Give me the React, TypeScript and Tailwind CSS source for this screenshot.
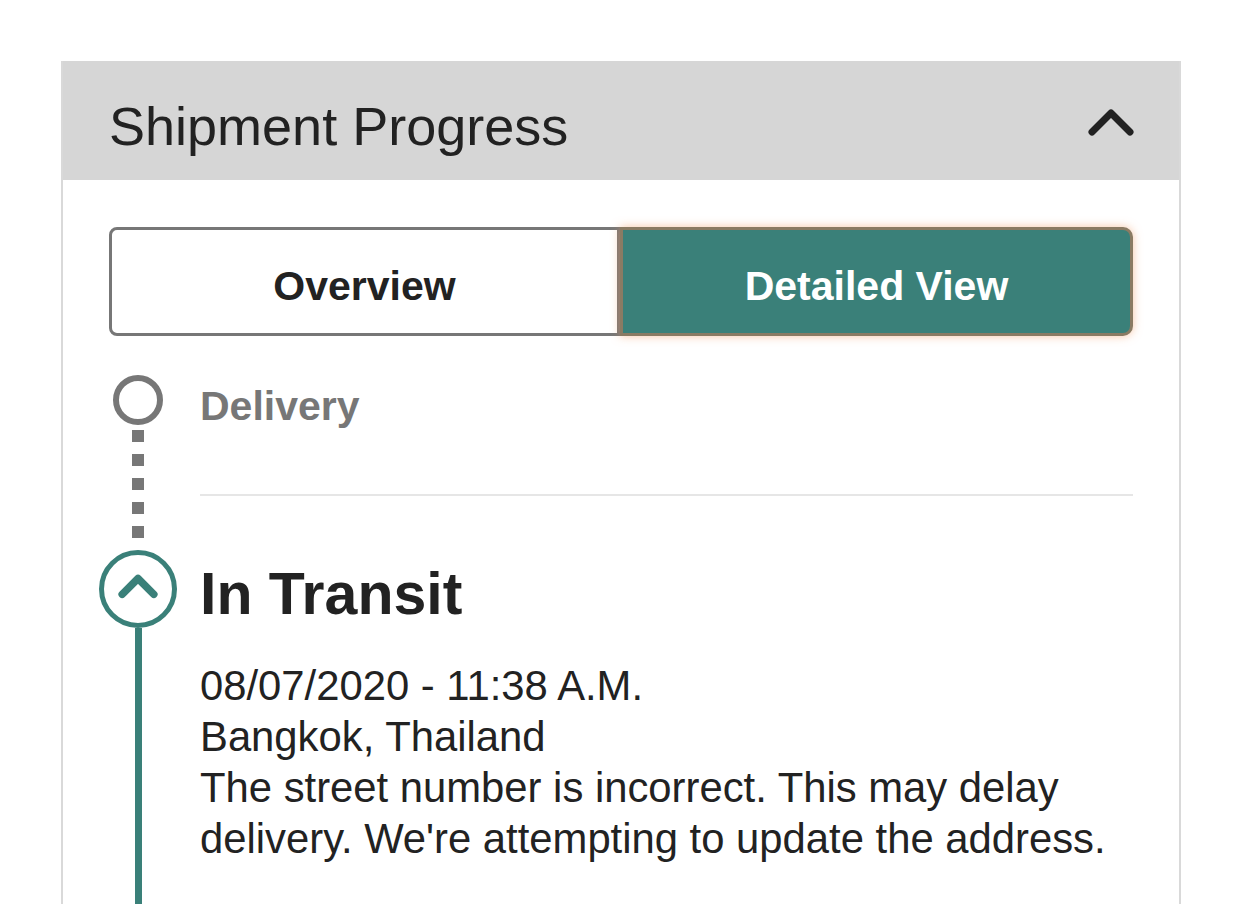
import React, { useState } from 'react';

const ChevronUp: React.FC<{ className?: string; strokeWidth?: number }> = ({ className, strokeWidth = 7 }) => (
  <svg viewBox="0 0 48 30" className={className} fill="none">
    <path d="M5 25 L24 6 L43 25" stroke="currentColor" strokeWidth={strokeWidth} strokeLinecap="round" strokeLinejoin="round" />
  </svg>
);

const App: React.FC = () => {
  const [view, setView] = useState<'overview' | 'detailed'>('detailed');

  return (
    <div className="min-h-screen bg-white pt-[61px] pl-[61px] overflow-hidden font-['Liberation_Sans',Arial,sans-serif] text-[#222]">
      <div className="w-[1120px] min-h-[843px] border-x-2 border-[#d9d9d9]">
        {/* Header */}
        <div className="h-[119px] bg-[#d6d6d6] flex items-center justify-between pl-[46px] pr-[44px]">
          <h2 className="text-[54px] leading-none pt-[10px] text-[#222]">Shipment Progress</h2>
          <ChevronUp className="w-[48px] h-[30px] text-[#222] mt-[2px]" />
        </div>

        <div className="px-[46px] pt-[47px]">
          {/* Toggle */}
          <div className="flex h-[109px]">
            <button
              onClick={() => setView('overview')}
              className={`flex-1 rounded-l-[8px] border-[3px] border-[#777] flex items-center justify-center text-[41px] font-bold pt-[10px] ${view === 'overview' ? 'bg-[#3a8079] text-white' : 'bg-white text-[#222]'}`}
            >
              Overview
            </button>
            <button
              onClick={() => setView('detailed')}
              className={`w-[513px] rounded-r-[10px] border-[3px] border-[#8a7b63] flex items-center justify-center text-[41px] font-bold pt-[10px] shadow-[0_0_10px_rgba(240,150,90,0.55)] ${view === 'detailed' ? 'bg-[#3a8079] text-white' : 'bg-white text-[#222]'}`}
            >
              Detailed View
            </button>
          </div>

          {/* Timeline */}
          <div className="mt-[39px]">
            {/* Delivery step */}
            <div className="flex h-[175px]">
              <div className="w-[58px] mr-[33px] flex flex-col items-center">
                <div className="w-[50px] h-[50px] shrink-0 rounded-full border-[6px] border-[#777] bg-white" />
                <div className="flex-1 w-[12px] mt-[5px] bg-[repeating-linear-gradient(to_bottom,#777_0px,#777_12px,transparent_12px,transparent_24px)]" />
              </div>
              <div className="flex-1">
                <div className="h-[50px] flex items-center text-[41px] font-bold text-[#777] pt-[14px]">Delivery</div>
                <div className="mt-[69px] h-[2px] bg-[#e6e6e6]" />
              </div>
            </div>

            {/* In Transit step */}
            <div className="flex">
              <div className="w-[58px] mr-[33px] flex flex-col items-center">
                <div className="w-[78px] h-[78px] shrink-0 rounded-full border-[5px] border-[#3a8079] bg-white flex items-center justify-center text-[#3a8079]">
                  <ChevronUp className="w-[40px] h-[26px] mb-[6px]" strokeWidth={9} />
                </div>
                <div className="flex-1 w-[7px] bg-[#3a8079]" />
              </div>
              <div className="flex-1">
                <div className="h-[78px] flex items-center text-[59px] font-bold pt-[11px]">In Transit</div>
                <div className="mt-[32px] text-[41.8px] leading-[51px] pb-[60px]">
                  <p>08/07/2020 - 11:38 A.M.</p>
                  <p>Bangkok, Thailand</p>
                  <p>The street number is incorrect. This may delay delivery. We're attempting to update the address.</p>
                </div>
              </div>
            </div>
          </div>
        </div>
      </div>
    </div>
  );
};

export default App;
